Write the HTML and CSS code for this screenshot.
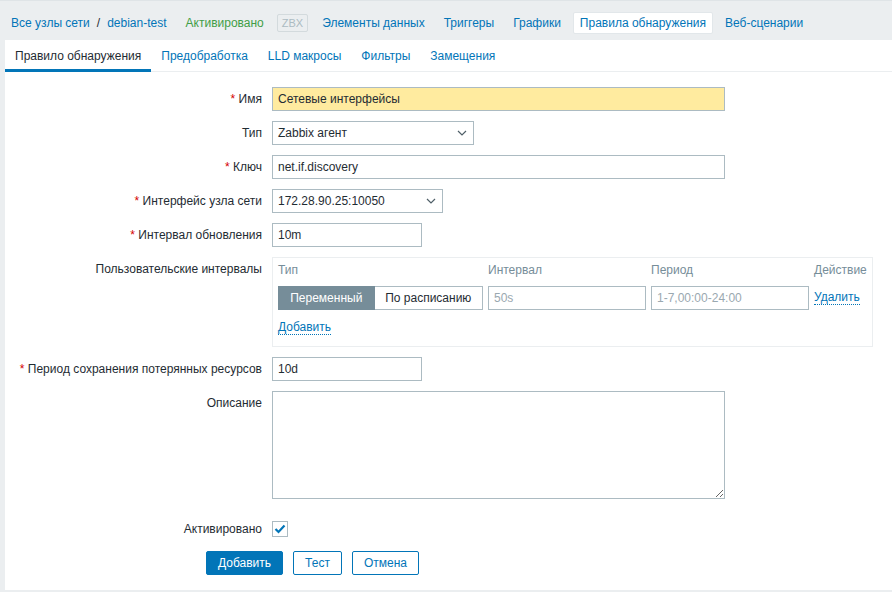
FILE: index.html
```html
<!DOCTYPE html>
<html lang="ru">
<head>
<meta charset="utf-8">
<title>Правила обнаружения</title>
<link rel="stylesheet" href="styles.css">
</head>
<body>
<header class="topnav">
  <a class="nav-item" href="#">Все узлы сети</a><span class="sep">/</span><a class="nav-item crumb2" href="#">debian-test</a>
  <span class="nav-item status"><span class="green">Активировано</span><span class="zbx">ZBX</span></span>
  <a class="nav-item" href="#">Элементы данных</a>
  <a class="nav-item" href="#">Триггеры</a>
  <a class="nav-item" href="#">Графики</a>
  <a class="nav-item selected" href="#">Правила обнаружения</a>
  <a class="nav-item" href="#">Веб-сценарии</a>
</header>
<main class="panel">
  <nav class="tabs">
    <a class="tab active" href="#">Правило обнаружения</a>
    <a class="tab" href="#">Предобработка</a>
    <a class="tab" href="#">LLD макросы</a>
    <a class="tab" href="#">Фильтры</a>
    <a class="tab" href="#">Замещения</a>
  </nav>
  <form class="form">
    <label class="lbl"><span class="req">*</span> Имя</label>
    <div class="fld"><input class="inp w-wide name" type="text" value="Сетевые интерфейсы"></div>

    <label class="lbl">Тип</label>
    <div class="fld"><div class="sel w-type"><span>Zabbix агент</span><svg class="chev" width="10" height="6" viewBox="0 0 10 6"><path d="M1 1l4 4 4-4" fill="none" stroke="#4f5f68" stroke-width="1.2"/></svg></div></div>

    <label class="lbl"><span class="req">*</span> Ключ</label>
    <div class="fld"><input class="inp w-wide" type="text" value="net.if.discovery"></div>

    <label class="lbl"><span class="req">*</span> Интерфейс узла сети</label>
    <div class="fld"><div class="sel w-iface"><span>172.28.90.25:10050</span><svg class="chev" width="10" height="6" viewBox="0 0 10 6"><path d="M1 1l4 4 4-4" fill="none" stroke="#4f5f68" stroke-width="1.2"/></svg></div></div>

    <label class="lbl"><span class="req">*</span> Интервал обновления</label>
    <div class="fld"><input class="inp w-short" type="text" value="10m"></div>

    <label class="lbl">Пользовательские интервалы</label>
    <div class="fld">
      <div class="intervals">
        <div class="ihead">Тип</div>
        <div class="ihead">Интервал</div>
        <div class="ihead">Период</div>
        <div class="ihead">Действие</div>
        <div class="toggle"><span class="tg on">Переменный</span><span class="tg">По расписанию</span></div>
        <input class="inp ph" type="text" placeholder="50s">
        <input class="inp ph" type="text" placeholder="1-7,00:00-24:00">
        <div class="act"><a class="dlink" href="#">Удалить</a></div>
        <div class="addrow"><a class="dlink" href="#">Добавить</a></div>
      </div>
    </div>

    <label class="lbl"><span class="req">*</span> Период сохранения потерянных ресурсов</label>
    <div class="fld"><input class="inp w-short" type="text" value="10d"></div>

    <label class="lbl">Описание</label>
    <div class="fld"><textarea class="ta"></textarea></div>

    <label class="lbl chk-lbl">Активировано</label>
    <div class="fld chk-fld"><span class="chk"><svg width="12" height="10" viewBox="0 0 12 10"><path d="M1.5 5l3 3 6-6.5" fill="none" stroke="#0275b8" stroke-width="2.2"/></svg></span></div>
  </form>
  <div class="buttons">
    <button class="btn primary" type="button">Добавить</button>
    <button class="btn" type="button">Тест</button>
    <button class="btn" type="button">Отмена</button>
  </div>
</main>
</body>
</html>
```
FILE: styles.css
```css
* { box-sizing: border-box; }
html, body { margin: 0; padding: 0; }
body {
  background: #ebeef0;
  font-family: "Liberation Sans", Arial, sans-serif;
  font-size: 12px;
  color: #1f2c33;
  width: 892px;
  height: 592px;
  overflow: hidden;
}
a { text-decoration: none; color: #0275b8; }

.topnav {
  display: flex;
  align-items: center;
  height: 40px;
  padding: 11px 0 7px 4px;
  gap: 5px;
  border-top: 1px solid #dfe4e7;
}
.nav-item {
  display: flex;
  align-items: center;
  height: 22px;
  padding: 0 7px;
  color: #0275b8;
  white-space: nowrap;
}
.sep { color: #1f2c33; margin: 0 -5px; }
.status { padding-right: 2px; }
.green { color: #429e47; }
.zbx {
  margin-left: 13px;
  border: 1px solid #d3dadd;
  color: #acbbc2;
  font-size: 11px;
  line-height: 16px;
  padding: 0 4px;
  border-radius: 2px;
}
.selected {
  background: #fff;
  border: 1px solid #e2e7ea;
  border-radius: 2px;
  padding: 0 6px;
}

.panel {
  background: #fff;
  margin-left: 5px;
  height: 550px;
}
.tabs {
  display: flex;
  border-bottom: 1px solid #ebeef0;
  height: 32px;
}
.tab {
  padding: 3px 10px 0;
  line-height: 26px;
  height: 32px;
  border-bottom: 3px solid transparent;
  margin-bottom: -1px;
  color: #0275b8;
}
.tab.active {
  color: #1f2c33;
  border-bottom-color: #0275b8;
}

.form {
  display: grid;
  grid-template-columns: 257px 1fr;
  column-gap: 10px;
  row-gap: 10px;
  padding-top: 15px;
}
.lbl {
  text-align: right;
  line-height: 24px;
  white-space: nowrap;
}
.req { color: #d40000; }
.fld { display: flex; }

.inp {
  height: 24px;
  border: 1px solid #acbbc2;
  background: #fff;
  padding: 0 5px;
  font-family: inherit;
  font-size: 12px;
  color: #1f2c33;
  outline: none;
  margin: 0;
}
.w-wide { width: 453px; }
.w-short { width: 150px; }
.name { background: #ffeb9f; }

.sel {
  height: 24px;
  border: 1px solid #acbbc2;
  display: flex;
  align-items: center;
  justify-content: space-between;
  padding: 0 6px 0 5px;
}
.w-type { width: 202px; }
.w-iface { width: 171px; }

.intervals {
  width: 601px;
  height: 90px;
  border: 1px solid #ebeef0;
  padding: 5px 5px 0;
  display: grid;
  grid-template-columns: 205px 158px 158px auto;
  grid-template-rows: 14px 33px 39px;
  column-gap: 5px;
  align-content: start;
}
.ihead {
  color: #768d99;
  line-height: 14px;
  white-space: nowrap;
}
.toggle, .intervals .inp, .act { margin-top: 9px; }
.intervals .inp { width: 100%; }
.ph::placeholder { color: #9aa8b0; }
.toggle {
  display: flex;
  height: 24px;
}
.tg {
  display: flex;
  align-items: center;
  justify-content: center;
  border: 1px solid #acbbc2;
  height: 24px;
  white-space: nowrap;
}
.tg.on {
  width: 97px;
  background: #768d99;
  border-color: #768d99;
  color: #fff;
}
.tg:not(.on) { width: 109px; border-left: none; }
.act { display: flex; align-items: center; height: 24px; }
.dlink {
  color: #0275b8;
  border-bottom: 1px dotted #0275b8;
  line-height: 13px;
}
.addrow {
  grid-column: 1 / -1;
  display: flex;
  align-items: center;
  height: 24px;
  margin-top: 6px;
}

.ta {
  width: 453px;
  height: 108px;
  border: 1px solid #acbbc2;
  resize: both;
  margin: 0;
  font-family: inherit;
  outline: none;
}
.chk-lbl, .chk-fld { margin-top: 8px; }
.chk-fld { align-items: center; height: 24px; }
.chk {
  width: 16px;
  height: 16px;
  border: 1px solid #acbbc2;
  display: flex;
  align-items: center;
  justify-content: center;
}

.buttons {
  display: flex;
  gap: 10px;
  padding-left: 201px;
  margin-top: 10px;
}
.btn {
  height: 24px;
  padding: 0 11px;
  border: 1px solid #0275b8;
  background: #fff;
  color: #0275b8;
  font-family: inherit;
  font-size: 12px;
  border-radius: 2px;
  margin: 0;
}
.btn.primary {
  background: #0275b8;
  color: #fff;
}
```
